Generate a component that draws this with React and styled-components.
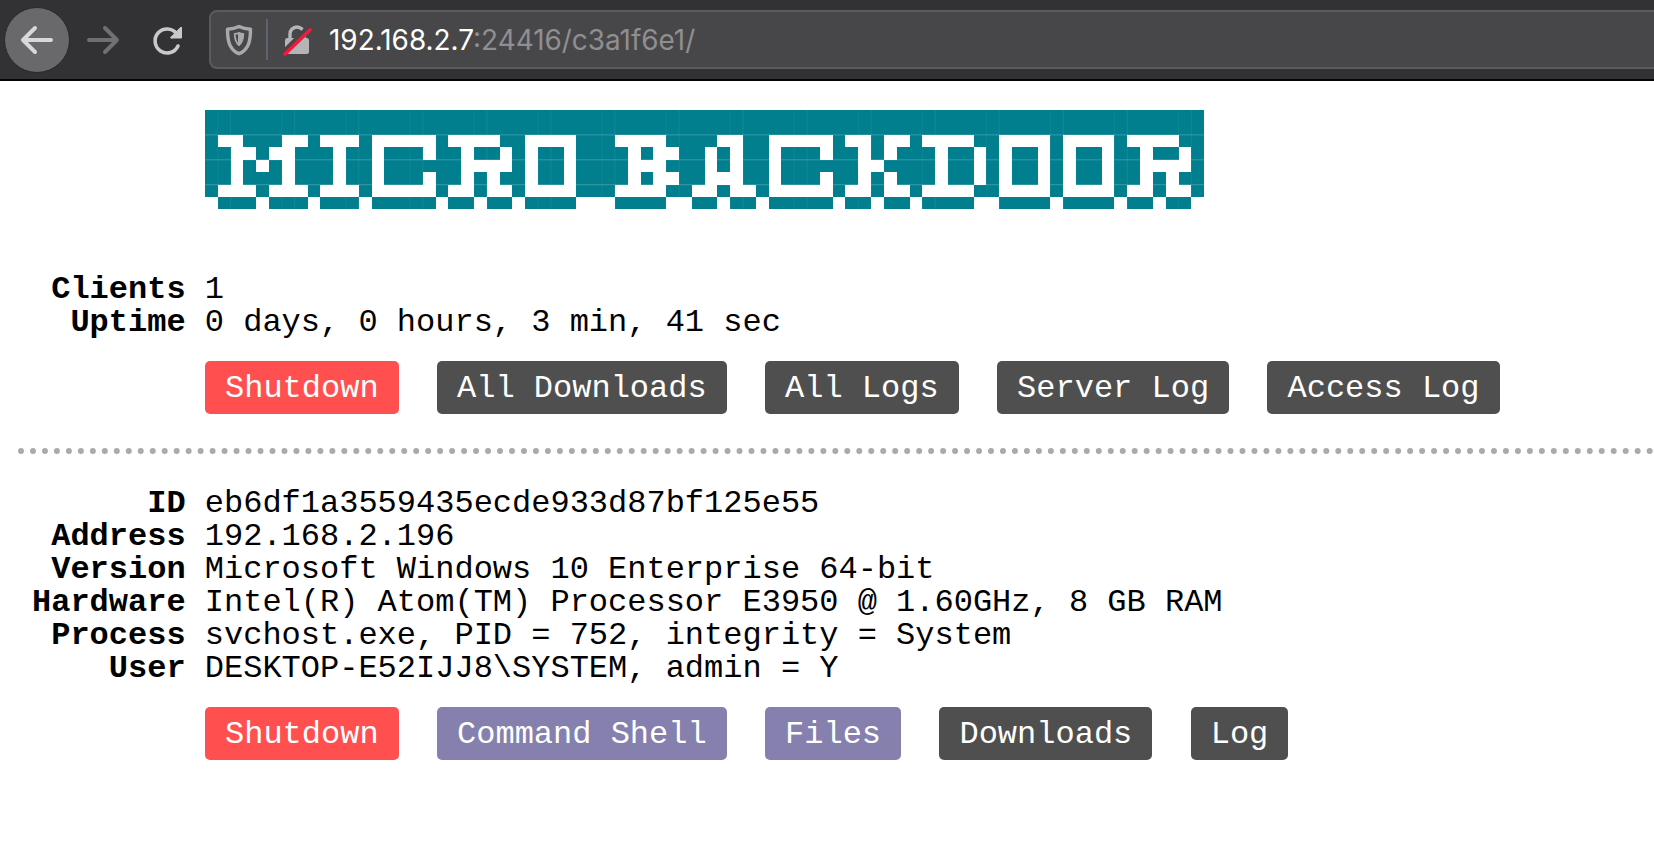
import styled, { createGlobalStyle } from "styled-components";

const GlobalStyle = createGlobalStyle`
  html, body {
    margin: 0;
    padding: 0;
    background: #fff;
    overflow: hidden;
  }
`;

const CELL_W = 12.81;
const CELL_H = 12.45;
const COLS = 78;
const LOGO_W = COLS * CELL_W;
const LOGO_H = 8 * CELL_H;

// white runs [from, to] per logo row, rows 0 and 1 are solid
const LOGO_WHITE = [
  [],
  [],
  [[1,2],[6,7],[9,11],[13,17],[19,22],[25,28],[32,35],[40,41],[44,48],[50,51],[53,54],[56,59],[62,65],[67,70],[72,75]],
  [[2,3],[5,6],[10,10],[13,13],[17,17],[20,20],[23,23],[25,25],[28,28],[33,33],[35,36],[39,39],[41,41],[44,44],[48,48],[51,51],[53,53],[57,57],[60,60],[62,62],[65,65],[67,67],[70,70],[73,73],[76,76]],
  [[2,2],[4,4],[6,6],[10,10],[13,13],[20,23],[25,25],[28,28],[33,35],[39,39],[41,41],[44,44],[51,52],[57,57],[60,60],[62,62],[65,65],[67,67],[70,70],[73,76]],
  [[2,2],[6,6],[10,10],[13,13],[17,17],[20,20],[22,22],[25,25],[28,28],[33,33],[35,36],[39,41],[44,44],[48,48],[51,51],[53,53],[57,57],[60,60],[62,62],[65,65],[67,67],[70,70],[73,73],[75,75]],
  [[1,3],[5,7],[9,11],[13,17],[19,20],[22,23],[25,28],[32,35],[38,39],[41,42],[44,48],[50,51],[53,54],[56,59],[62,65],[67,70],[72,73],[75,76]],
];

const TILE_COLS = Array.from({ length: 16 }, (_, i) => i * 5 + 2).filter((c) => c < COLS);

const Logo = () => (
  <LogoSvg width={LOGO_W} height={LOGO_H} viewBox={`0 0 ${LOGO_W} ${LOGO_H}`}>
    <rect width={LOGO_W} height={7 * CELL_H} fill="#027f8e" shapeRendering="crispEdges" />
    {LOGO_WHITE[6].map(([from, to]) => (
      <rect key={from} x={from * CELL_W} y={7 * CELL_H} width={(to - from + 1) * CELL_W} height={CELL_H} fill="#027f8e" shapeRendering="crispEdges" />
    ))}
    {/* faint seams of the tiled banner image */}
    {[2, 4, 6].map((r) => (
      <line key={r} x1="0" x2={LOGO_W} y1={r * CELL_H} y2={r * CELL_H} stroke="#fff" strokeOpacity="0.22" strokeWidth="1" />
    ))}
    {TILE_COLS.map((c) => (
      <g key={c}>
        <line x1={c * CELL_W} x2={c * CELL_W} y1="0" y2={LOGO_H} stroke="#fff" strokeOpacity="0.08" strokeWidth="1" />
        <line x1={(c - 1) * CELL_W} x2={(c - 1) * CELL_W} y1="0" y2={LOGO_H} stroke="#fff" strokeOpacity="0.05" strokeWidth="1" />
      </g>
    ))}
    {LOGO_WHITE.map((runs, row) =>
      runs.map(([from, to]) => (
        <rect key={`${row}-${from}`} x={from * CELL_W} y={row * CELL_H} width={(to - from + 1) * CELL_W} height={CELL_H} fill="#fff" shapeRendering="crispEdges" />
      ))
    )}
  </LogoSvg>
);

const BackIcon = () => (
  <svg width="34" height="30" viewBox="0 0 34 30" fill="none" stroke="#d8d8d8" strokeWidth="4" strokeLinecap="round" strokeLinejoin="round">
    <path d="M3 15h28M15 3 3 15l12 12" />
  </svg>
);

const ForwardIcon = () => (
  <svg width="34" height="30" viewBox="0 0 34 30" fill="none" stroke="#707072" strokeWidth="4" strokeLinecap="round" strokeLinejoin="round">
    <path d="M3 15h28M19 3l12 12-12 12" />
  </svg>
);

const ReloadIcon = () => (
  <svg width="34" height="34" viewBox="0 0 34 34" fill="none" stroke="#c9c9c9" strokeWidth="3.6" strokeLinecap="round" strokeLinejoin="round">
    <path d="M25.500 10.500A12 12 0 1 0 27 23" />
    <path d="M30 5v9.500H20.500" fill="#c9c9c9" strokeWidth="2" />
    <path d="M30 5 20.500 14.500" strokeWidth="2" />
  </svg>
);

const ShieldIcon = () => (
  <svg width="28" height="32" viewBox="0 0 28 32" fill="none" stroke="#a9a9ab" strokeWidth="3.4" strokeLinejoin="round">
    <path d="M14 2.500c3.500 1.700 7 2.500 11.500 2.700 0 11-1.500 20.500-11.500 24.500C4 25.700 2.500 16.200 2.500 5.200 7 5 10.500 4.200 14 2.500Z" />
    <path d="M14 9c-1.400.6-2.800.9-4.300 1 .1 4.500 1 8.500 4.300 11Z" strokeWidth="1.800" />
    <path d="M14 9c1.400.6 2.800.9 4.300 1-.1 4.500-1 8.500-4.300 11Z" fill="#a9a9ab" strokeWidth="1.800" />
  </svg>
);

const LockIcon = () => (
  <svg width="30" height="32" viewBox="0 0 30 32">
    <path d="M8 15V10a7 7 0 0 1 14 0v5" fill="none" stroke="#b5b5b7" strokeWidth="3.400" />
    <rect x="3" y="14" width="24" height="16" rx="2.500" fill="#b5b5b7" />
    <path d="M0 29 25 4" stroke="#474749" strokeWidth="4" />
    <path d="M3 30 28 6" stroke="#f5173f" strokeWidth="3.600" strokeLinecap="round" />
  </svg>
);

const App = () => {
  return (
    <Page>
      <GlobalStyle />
      <Toolbar>
        <BackCircle>
          <BackIcon />
        </BackCircle>
        <ForwardButton>
          <ForwardIcon />
        </ForwardButton>
        <ReloadButton>
          <ReloadIcon />
        </ReloadButton>
        <UrlBar>
          <ShieldIcon />
          <UrlDivider />
          <LockIcon />
          <UrlText>
            192.168.2.7<UrlMuted>:24416/c3a1f6e1/</UrlMuted>
          </UrlText>
        </UrlBar>
      </Toolbar>

      <Content>
        <Logo />

        <InfoGrid $top={64}>
          <Label>Clients</Label>
          <Value>1</Value>
          <Label>Uptime</Label>
          <Value>0 days, 0 hours, 3 min, 41 sec</Value>
        </InfoGrid>
        <ButtonRow>
          <ActionButton $kind="danger">Shutdown</ActionButton>
          <ActionButton>All Downloads</ActionButton>
          <ActionButton>All Logs</ActionButton>
          <ActionButton>Server Log</ActionButton>
          <ActionButton>Access Log</ActionButton>
        </ButtonRow>

        <DottedRule />

        <InfoGrid $top={0}>
          <Label>ID</Label>
          <Value>eb6df1a3559435ecde933d87bf125e55</Value>
          <Label>Address</Label>
          <Value>192.168.2.196</Value>
          <Label>Version</Label>
          <Value>Microsoft Windows 10 Enterprise 64-bit</Value>
          <Label>Hardware</Label>
          <Value>Intel(R) Atom(TM) Processor E3950 @ 1.60GHz, 8 GB RAM</Value>
          <Label>Process</Label>
          <Value>svchost.exe, PID = 752, integrity = System</Value>
          <Label>User</Label>
          <Value>DESKTOP-E52IJJ8\SYSTEM, admin = Y</Value>
        </InfoGrid>
        <ButtonRow>
          <ActionButton $kind="danger">Shutdown</ActionButton>
          <ActionButton $kind="accent">Command Shell</ActionButton>
          <ActionButton $kind="accent">Files</ActionButton>
          <ActionButton>Downloads</ActionButton>
          <ActionButton>Log</ActionButton>
        </ButtonRow>
      </Content>
    </Page>
  );
};

const buttonColors = {
  danger: "#ff4f4f",
  accent: "#8680ae",
  plain: "#4f4f4f",
};

const Page = styled.div`
  width: 1654px;
  height: 841px;
  overflow: hidden;
  background: #fff;
  font-family: "Liberation Mono", "Courier New", monospace;
  color: #000;
`;

const Toolbar = styled.div`
  height: 81px;
  box-sizing: border-box;
  display: flex;
  align-items: center;
  background: #323234;
  border-bottom: 2px solid #050505;
  padding-left: 4px;
`;

const BackCircle = styled.div`
  width: 66px;
  height: 66px;
  border-radius: 50%;
  background: #69696b;
  border: 1px solid #29292b;
  box-sizing: border-box;
  display: flex;
  align-items: center;
  justify-content: center;
`;

const ForwardButton = styled.div`
  display: flex;
  margin-left: 16px;
`;

const ReloadButton = styled.div`
  display: flex;
  margin-left: 31px;
`;

const UrlBar = styled.div`
  flex: 1;
  height: 59px;
  margin-left: 24px;
  margin-right: -10px;
  box-sizing: border-box;
  display: flex;
  align-items: center;
  background: #474749;
  border: 2px solid #5b5b5d;
  border-radius: 8px;
  padding-left: 14px;
`;

const UrlDivider = styled.div`
  width: 2px;
  height: 41px;
  background: #5c6470;
  margin: 0 14px 0 13px;
`;

const UrlText = styled.div`
  margin-left: 17px;
  font-family: Inter, "Liberation Sans", sans-serif;
  font-size: 27.9px;
  color: #fff;
`;

const UrlMuted = styled.span`
  color: #8f8f91;
`;

const Content = styled.div`
  padding-top: 28.5px;
`;

const LogoSvg = styled.svg`
  display: block;
  margin-left: 205px;
`;

const InfoGrid = styled.div`
  display: grid;
  grid-template-columns: 153.6px 1fr;
  column-gap: 19.2px;
  padding-left: 32px;
  margin-top: ${(props) => props.$top}px;
  font-size: 32px;
  line-height: 33px;
  white-space: pre;
`;

const Label = styled.div`
  font-weight: 700;
  text-align: right;
`;

const Value = styled.div``;

const ButtonRow = styled.div`
  display: flex;
  gap: 38.4px;
  padding-left: 205px;
  margin-top: 22px;
`;

const ActionButton = styled.div`
  height: 53px;
  box-sizing: border-box;
  padding: 1px 20px 0;
  border-radius: 5px;
  display: flex;
  align-items: center;
  font-size: 32px;
  color: #fff;
  background: ${(props) => buttonColors[props.$kind || "plain"]};
`;

const DottedRule = styled.div`
  margin: 34px 0 33px 18px;
  border-top: 6px dotted #aaaaaa;
`;

export default App;
